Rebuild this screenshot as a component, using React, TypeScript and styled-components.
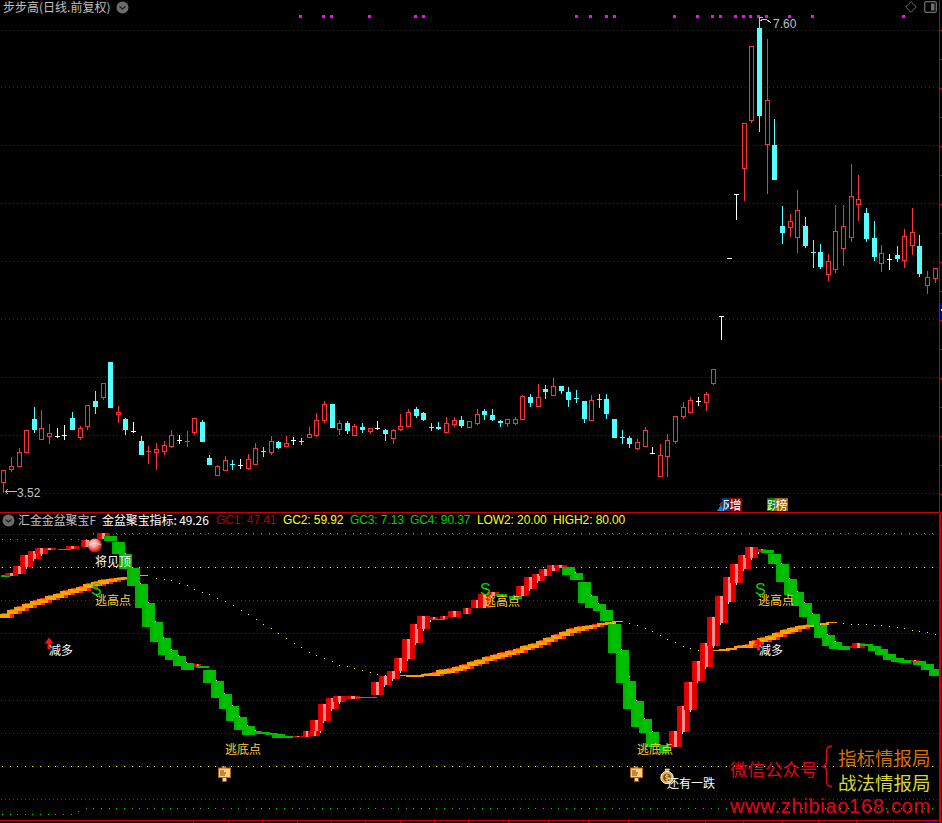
import React from "react";
import styled, { createGlobalStyle } from "styled-components";

const Global = createGlobalStyle`
  html, body { margin: 0; padding: 0; background: #000; }
  #root { width: 942px; height: 823px; overflow: hidden; }
`;

const Screen = styled.main`
  display: flex;
  flex-direction: column;
  width: 942px;
  height: 823px;
  background: #000;
  font-family: "Liberation Sans", "Noto Sans CJK SC", sans-serif;
  font-size: 12px;
  overflow: hidden;
`;
const Pane = styled.section<{ $h: number; $divider?: boolean }>`
  position: relative;
  flex: none;
  width: 942px;
  height: ${(p) => p.$h}px;
  border-top: ${(p) => (p.$divider ? "1px solid #c80000" : "none")};
  overflow: hidden;
`;
const Chart = styled.svg`
  display: block;
  width: 942px;
  height: 100%;
  shape-rendering: crispEdges;
`;
const TitleBar = styled.header<{ $top: number; $gap: number }>`
  position: absolute;
  top: ${(p) => p.$top}px;
  left: 0;
  right: 0;
  height: 14px;
  display: flex;
  align-items: center;
  gap: ${(p) => p.$gap}px;
  padding-left: 2px;
  white-space: nowrap;
  line-height: 14px;
`;
const StockName = styled.span`
  color: #c0c0c0;
  font-family: "Noto Sans CJK SC", "Liberation Sans", sans-serif;
  font-size: 12px;
  margin-left: 1px;
`;
const Metric = styled.span<{ $color: string; $cjk?: boolean; $w: number }>`
  color: ${(p) => p.$color};
  flex: none;
  width: ${(p) => p.$w}px;
  font-family: ${(p) => (p.$cjk ? '"Noto Sans CJK SC", ' : "")}"Liberation Sans", sans-serif;
  font-size: 12px;
  letter-spacing: -0.1px;
`;
const FundName = styled(Metric)`
  margin-left: 3px;
`;
const RoundChevron = styled.svg`
  flex: none;
  width: 13px;
  height: 13px;
`;
const WindowTools = styled.div`
  display: flex;
  align-items: center;
  gap: 7px;
  margin-left: auto;
  padding-right: 5px;
`;
const Label = styled.span<{ $x: number; $y: number; $color: string; $size?: number }>`
  position: absolute;
  left: ${(p) => p.$x}px;
  top: ${(p) => p.$y}px;
  color: ${(p) => p.$color};
  font-family: "Noto Sans CJK SC", sans-serif;
  font-size: ${(p) => p.$size ?? 12}px;
  line-height: 1;
  white-space: nowrap;
`;
const PriceTag = styled.span<{ $x: number; $y: number }>`
  position: absolute;
  left: ${(p) => p.$x}px;
  top: ${(p) => p.$y}px;
  color: #c0c0c0;
  font-family: "Liberation Sans", sans-serif;
  font-size: 12px;
  line-height: 1;
`;
const Badge = styled.div<{ $x: number }>`
  position: absolute;
  left: ${(p) => p.$x}px;
  top: 498px;
  height: 13px;
  display: flex;
`;
const BadgeCell = styled.span<{ $bg: string; $w: number }>`
  display: block;
  width: ${(p) => p.$w}px;
  height: 13px;
  overflow: hidden;
  background: ${(p) => p.$bg};
  color: #fff;
  font-family: "Noto Sans CJK SC", sans-serif;
  font-size: 12px;
  line-height: 13px;
  text-align: center;
`;
const SignalS = styled.span<{ $x: number; $y: number }>`
  position: absolute;
  left: ${(p) => p.$x}px;
  top: ${(p) => p.$y}px;
  color: #00d400;
  font-family: "Liberation Sans", sans-serif;
  font-size: 16px;
  line-height: 1;
`;
const Watermark = styled.span<{ $x: number; $y: number; $color: string; $size: number }>`
  position: absolute;
  left: ${(p) => p.$x}px;
  top: ${(p) => p.$y}px;
  color: ${(p) => p.$color};
  font-family: "Noto Sans CJK SC", sans-serif;
  font-size: ${(p) => p.$size}px;
  line-height: 1;
  white-space: nowrap;
`;
const SiteLink = styled.span`
  position: absolute;
  left: 730px;
  top: 283px;
  color: #e8001c;
  font-family: "Liberation Sans", sans-serif;
  font-size: 20px;
  letter-spacing: 0.72px;
  line-height: 1;
  white-space: nowrap;
`;

type Row = [number, number, number, number, number, string];
const CANDLES: { ox: number; oy: number; rows: Row[] }[] = [
  { ox: 0, oy: 350, rows: [
    [10,361,361,395,430,"r"],[34,322,348,358,365,"r"],[58,295,307,347,350,"r"],[79,240,241,307,307,"r"],
    [103,172,208,240,249,"c"],[124,180,235,266,266,"r"],[148,222,250,257,282,"r"],[171,235,257,258,263,"w"],
    [192,225,255,256,270,"w"],[217,186,204,240,240,"c"],[241,229,235,260,269,"r"],[262,165,166,227,240,"r"],
    [286,124,153,171,192,"c"],[310,99,99,140,150,"r"],[331,36,36,174,174,"c"],[355,168,186,193,219,"r"],
    [376,205,208,240,255,"c"],[400,216,244,245,249,"w"],[424,258,273,315,315,"c"],[445,288,304,306,342,"r"],
    [469,279,298,307,360,"r"],[493,273,286,302,315,"r"],[514,240,256,288,294,"r"],[538,255,270,271,282,"w"],
    [562,243,274,276,291,"r"],[583,205,205,245,255,"r"],[607,210,216,276,276,"c"],[628,315,324,345,345,"c"],
    [652,345,348,375,375,"r"],[676,318,330,361,361,"r"],[697,330,343,344,360,"d"],[720,327,344,345,357,"w"],
    [745,312,327,353,360,"r"],[766,279,294,341,341,"r"],[790,291,304,305,321,"d"],[814,258,273,305,315,"r"],
    [835,273,276,294,297,"c"],[859,258,280,287,291,"r"],[880,261,271,272,285,"w"],[904,264,273,274,285,"d"],
    [928,231,252,261,264,"r"],
  ]},
  { ox: 314, oy: 350, rows: [
    [8,189,210,255,261,"r"],[31,153,162,210,219,"r"],[55,162,162,234,234,"c"],[76,210,219,236,255,"r"],
    [100,213,219,243,252,"c"],[121,222,228,255,258,"r"],[145,219,231,240,249,"c"],[169,234,235,242,252,"r"],
    [190,213,235,236,240,"w"],[214,237,240,252,273,"c"],[238,237,240,264,282,"r"],[259,192,228,236,243,"r"],
    [283,177,186,228,228,"r"],[307,171,177,198,204,"c"],[328,186,189,210,213,"c"],[352,219,232,233,243,"d"],
    [373,216,231,237,240,"c"],[397,201,219,246,246,"r"],[421,201,210,221,231,"r"],[442,198,210,228,234,"c"],
    [466,213,213,231,231,"r"],[490,177,192,219,225,"r"],[511,177,183,195,210,"c"],[535,177,195,210,213,"c"],
    [559,210,212,218,231,"c"],[580,207,207,220,231,"r"],[604,201,207,219,225,"r"],[625,135,138,207,210,"r"],
    [649,132,141,159,171,"c"],[673,102,141,167,167,"r"],[694,105,117,126,147,"c"],[718,84,108,135,138,"r"],
    [742,108,108,123,132,"c"],[763,111,126,150,171,"c"],[787,120,144,145,159,"d"],[811,153,153,207,219,"c"],
    [832,135,150,209,209,"r"],[856,132,147,148,174,"d"],[877,132,147,192,207,"c"],[901,207,207,264,264,"c"],
    [925,240,261,262,282,"d"],
  ]},
  { ox: 628, oy: 350, rows: [
    [4,258,264,282,294,"c"],[28,267,276,293,300,"r"],[52,231,240,288,291,"r"],[73,291,309,310,310,"w"],
    [97,282,315,378,378,"r"],[118,252,270,318,381,"r"],[142,198,198,273,282,"r"],[166,156,171,198,207,"r"],
    [187,141,150,186,189,"r"],[211,141,153,154,168,"w"],[235,126,132,156,183,"r"],[256,57,57,99,105,"r"],
  ]},
  { ox: 700, oy: 170, rows: [
    [64,438,438,439,510,"w"],[87,265,265,266,265,"w"],[109,72,72,73,150,"w"],
  ]},
  { ox: 700, oy: 0, rows: [
    [133,370,370,503,603,"r"],[154,138,138,360,369,"r"],[178,50,84,348,396,"c"],[202,117,300,432,582,"r"],
    [223,357,435,540,540,"c"],
  ]},
  { ox: 700, oy: 170, rows: [
    [247,108,168,189,222,"c"],[271,132,153,170,201,"r"],[292,60,120,201,249,"r"],[316,141,168,228,234,"c"],
    [340,210,246,247,294,"d"],[361,222,246,291,297,"c"],[385,252,273,312,333,"r"],[406,105,183,296,309,"r"],
    [430,105,168,234,288,"r"],[454,-18,78,201,216,"r"],[475,15,87,102,153,"r"],[499,114,129,207,216,"c"],
    [523,153,204,261,273,"c"],[544,225,249,279,306,"r"],[568,252,268,269,300,"w"],[592,228,255,267,276,"c"],
    [613,177,198,270,294,"r"],[637,114,186,225,255,"r"],[658,195,228,312,321,"c"],[682,303,321,345,372,"r"],
    [706,294,294,324,339,"r"],
  ]},
];

const RED = "#ff3232";
const CYAN = "#54ffff";

type Block = [number, number, number, number, "R" | "G"];
const BLOCKS: { ox: number; oy: number; rows: Block[] }[] = [
  { ox: 0, oy: 510, rows: [
    [3,192,30,198,"G"],[16,185,54,195,"R"],[39,166,78,188,"R"],[60,133,100,168,"R"],[84,120,123,145,"R"],
    [105,111,145,130,"R"],[130,111,170,118,"R"],[175,113,215,117,"G"],[198,105,237,114,"R"],[243,87,280,108,"R"],
    [291,67,330,85,"R"],[312,75,351,90,"G"],[336,93,375,130,"G"],[357,130,396,175,"G"],[381,171,420,225,"G"],
    [405,219,444,291,"G"],[426,276,465,348,"G"],[450,333,489,393,"G"],[474,381,513,432,"G"],[495,418,534,447,"G"],
  ]},
  { ox: 0, oy: 660, rows: [
    [519,-15,558,15,"G"],[543,6,582,27,"G"],[582,9,603,18,"R"],[588,15,628,21,"G"],[609,27,648,66,"G"],
    [633,60,672,111,"G"],[657,99,696,144,"G"],[678,135,717,180,"G"],[702,168,741,207,"G"],[726,195,765,222,"G"],
    [765,210,786,218,"G"],[780,213,810,219,"G"],[795,216,835,222,"G"],[816,219,855,231,"G"],[850,225,880,231,"G"],
    [880,225,910,228,"R"],[909,210,933,228,"R"],[930,177,960,225,"R"],
  ]},
  { ox: 314, oy: 690, rows: [
    [-12,87,27,120,"R"],[12,39,51,90,"R"],[36,21,75,54,"R"],[58,15,96,33,"R"],[96,15,140,24,"R"],[126,18,189,21,"G"],
  ]},
  { ox: 314, oy: 510, rows: [
    [171,513,210,552,"R"],[195,495,234,522,"R"],[219,480,258,504,"R"],[240,441,279,480,"R"],[264,384,303,444,"R"],
    [288,339,327,396,"R"],[309,315,348,354,"R"],[348,318,372,327,"R"],[354,323,393,327,"G"],[378,315,402,324,"R"],
    [402,300,441,318,"R"],[447,291,471,309,"R"],[471,267,510,291,"R"],[492,249,531,291,"R"],[519,243,555,255,"R"],
    [546,250,579,256,"G"],[585,255,624,264,"G"],[606,225,645,255,"R"],[630,198,669,234,"R"],[654,189,693,210,"R"],
    [675,174,714,195,"R"],[699,162,738,180,"R"],[720,162,760,170,"R"],[744,168,783,192,"G"],[768,186,807,207,"G"],
    [792,213,831,276,"G"],[813,255,852,291,"G"],[837,279,876,300,"G"],[858,297,897,330,"G"],[882,339,921,426,"G"],
    [906,417,945,516,"G"],[927,516,966,570,"G"],
  ]},
  { ox: 600, oy: 680, rows: [
    [48,-12,90,6,"G"],[69,0,108,84,"G"],[93,60,132,138,"G"],[117,114,156,156,"G"],[138,153,177,198,"G"],[177,192,207,216,"G"],
    [207,150,246,198,"R"],[231,75,270,153,"R"],[252,3,291,87,"R"],
  ]},
  { ox: 628, oy: 510, rows: [
    [192,450,231,510,"R"],[216,396,255,468,"R"],[237,318,276,405,"R"],[261,255,300,336,"R"],[285,198,324,273,"R"],
    [306,159,345,216,"R"],[330,132,369,174,"R"],[351,108,390,141,"R"],[390,114,414,123,"R"],[399,117,438,126,"G"],
    [420,129,459,159,"G"],[444,159,483,213,"G"],[468,204,507,252,"G"],[489,243,528,285,"G"],[513,276,552,318,"G"],
    [537,309,576,342,"G"],[558,342,597,381,"G"],[582,372,621,405,"G"],[603,393,642,414,"G"],[627,405,666,417,"G"],
    [666,405,672,411,"R"],[672,396,711,411,"R"],[696,399,735,405,"G"],[720,405,759,420,"G"],[741,414,780,432,"G"],
    [765,429,804,447,"G"],[789,441,828,453,"G"],[810,447,849,456,"G"],[849,447,873,453,"R"],[855,450,894,462,"G"],
    [879,459,918,477,"G"],[903,474,933,495,"G"],
  ]},
];

const toPts = (ox: number, oy: number, list: number[][]) =>
  list.map(([x, y]) => [ox + x / 3, oy + y / 3]);

const BAND_1 = toPts(0, 510, [[3,315],[40,297],[85,280],[130,265],[170,252],[215,238],[260,225],[300,212],[350,203],[400,195],[445,193]]);
const BAND_2 = toPts(314, 510, [[258,496],[300,495],[350,488],[400,480],[450,465],[500,448],[550,433],[600,422],[650,403],[700,385],[750,365],[800,350],[850,340],[900,332],[925,329]]);
const BAND_3 = toPts(628, 510, [[255,420],[300,414],[350,403],[400,385],[450,368],[500,350],[550,340],[625,334]]);

const TRAIL = [
  ...toPts(0, 510, [[469,200],[492,204],[514,208],[538,216],[561,223],[583,233],[607,242],[628,250],[652,260],[676,271],[699,283],[722,297],[745,310],[767,324],[790,339],[814,352],[835,367],[859,381],[881,396],[904,408],[928,422]]),
  ...toPts(314, 510, [[7,433],[31,442],[55,451],[76,461],[100,464],[121,472],[145,478],[169,484],[190,490],[214,493]]),
  ...toPts(628, 510, [[4,337],[28,343],[52,352],[73,361],[97,373],[118,385],[142,394],[166,406],[187,411],[211,417],[646,337],[670,338],[691,338],[715,340],[739,343],[760,343],[784,346],[808,349],[829,352],[853,358],[874,361],[898,364],[922,370]]),
];

const MAGENTA = [300,323,331,369,415,423,576,590,606,614,674,697,712,720,735,743,750,758,766,789,812,903];
const UPPER_GRID = [30,87,145,203,261,319,377,435,493];
const LOWER_GRID = [533,566,599,632,665,699,732,765,798];
const BOTTOM_TICKS = [193,228,262,297,331,365,400,434,468,508,548,588,628,667,705,743,782,818,856,893];

const range = (from: number, to: number, step: number) => {
  const out: number[] = [];
  for (let v = from; v <= to; v += step) out.push(v);
  return out;
};

function Candle({ row, ox, oy }: { row: Row; ox: number; oy: number }) {
  const [xz, hi, top, bot, lo, kind] = row;
  const x = Math.floor(ox + xz / 3);
  const y = (v: number) => Math.round(oy + v / 3);
  const color = kind === "r" ? RED : kind === "w" ? "#fff" : CYAN;
  const bodyH = Math.max(1, y(bot) - y(top));
  return (
    <g>
      {y(top) > y(hi) && <rect x={x} y={y(hi)} width={1} height={y(top) - y(hi)} fill={color} />}
      {y(lo) > y(bot) && <rect x={x} y={y(bot)} width={1} height={y(lo) - y(bot)} fill={color} />}
      {kind === "r" && bodyH > 1 ? (
        <rect x={x - 1.5} y={y(top) + 0.5} width={4} height={bodyH} fill="#000" stroke={color} />
      ) : (
        <rect x={x - 2} y={y(top)} width={5} height={bodyH} fill={color} />
      )}
    </g>
  );
}

function Stairs() {
  const flat = BLOCKS.flatMap((g) =>
    g.rows.map(([x1, t, x2, b, c]) => {
      const left = Math.floor(g.ox + x1 / 3);
      const right = Math.floor(g.ox + x2 / 3);
      const top = Math.round(g.oy + t / 3);
      const bottom = Math.round(g.oy + b / 3);
      return { left, right, top, bottom, c };
    })
  );
  flat.sort((a, b) => a.left - b.left);
  return (
    <g>
      {flat.map((b, i) => (
        <rect
          key={i}
          x={b.left}
          y={b.top}
          width={b.right - b.left}
          height={Math.max(1, b.bottom - b.top)}
          fill={b.c === "R" ? "url(#redBar)" : "url(#greenBar)"}
        />
      ))}
      {flat.map((b, i) => {
        const n = flat[i + 1];
        if (!n || n.c !== b.c || b.bottom - b.top < 8) return null;
        if (b.c === "G" && n.top > b.top) {
          return <rect key={"w" + i} x={b.right} y={n.top - 1} width={1} height={1} fill="#fff" />;
        }
        if (b.c === "R" && n.bottom < b.bottom) {
          return <rect key={"w" + i} x={b.right} y={n.bottom} width={1} height={2} fill="#fff" />;
        }
        return null;
      })}
    </g>
  );
}

function Band({ points, fullStart }: { points: number[][]; fullStart?: boolean }) {
  const [x0] = points[0];
  const xEnd = points[points.length - 1][0];
  const at = (x: number) => {
    for (let i = 1; i < points.length; i++) {
      if (x <= points[i][0]) {
        const [ax, ay] = points[i - 1];
        const [bx, by] = points[i];
        return ay + ((by - ay) * (x - ax)) / (bx - ax);
      }
    }
    return points[points.length - 1][1];
  };
  const steps = range(x0, xEnd - 6, 7.65).map((x, i, all) => {
    const fromStart = fullStart ? 99 : i;
    const fromEnd = all.length - 1 - i;
    const h = Math.round(Math.min(5, 1 + Math.min(fromStart, fromEnd) * 0.7));
    return { left: Math.round(x), y: Math.round(at(x)), h };
  });
  return (
    <g>
      {steps.map((s, i) =>
        s.h >= 3 ? (
          <rect key={"r" + i} x={s.left + 1} y={s.y - Math.ceil(s.h / 2)} width={12} height={s.h} fill="#ff2400" />
        ) : null
      )}
      {steps.map((s, i) => (
        <rect
          key={"o" + i}
          x={s.left - 2}
          y={s.y - Math.ceil(s.h / 2) + (s.h >= 3 ? 1 : 0)}
          width={11}
          height={s.h >= 3 ? s.h - 1 : s.h}
          fill="#ff9c00"
        />
      ))}
      {steps.map((s, i) =>
        s.h >= 5 ? <rect key={"y" + i} x={s.left + 1} y={s.y} width={5} height={1} fill="#ffb800" /> : null
      )}
    </g>
  );
}

const Chevron = () => (
  <RoundChevron viewBox="0 0 13 13">
    <circle cx="6.5" cy="6.5" r="6" fill="#6c6c6c" />
    <path d="M3.5 5.5 L6.5 8 L9.5 5.5" stroke="#1c1c1c" strokeWidth="1.2" fill="none" />
  </RoundChevron>
);

const Sign = ({ x, y }: { x: number; y: number }) => (
  <g transform={`translate(${x} ${y})`} shapeRendering="auto">
    <rect x="4" y="0" width="4" height="2" fill="#e0983c" />
    <rect x="4.5" y="11" width="4" height="4" fill="#ffd9a0" stroke="#a05810" strokeWidth="1" />
    <rect x="0.5" y="1.5" width="12" height="9.5" fill="#ffcf80" stroke="#b06010" strokeWidth="1" />
    <path d="M2 4.5 H6 M2 6.5 H8 M2 8.5 H7" stroke="#7a4008" strokeWidth="1" />
  </g>
);

export default function App() {
  const dots = range(2, 935, 7.62);
  return (
    <Screen>
      <Global />
      <Pane $h={512}>
        <Chart viewBox="0 0 942 512">
          {UPPER_GRID.map((y) => (
            <line key={y} x1={1} x2={939} y1={y + 0.5} y2={y + 0.5} stroke="#a00000" strokeDasharray="1 3" />
          ))}
          {CANDLES.flatMap((g, gi) =>
            g.rows.map((r, i) => <Candle key={gi + "-" + i} row={r} ox={g.ox} oy={g.oy} />)
          )}
          {MAGENTA.map((x) => (
            <rect key={x} x={x - 1} y={15} width={3} height={3} fill="#ff00ff" />
          ))}
          <path d="M17 491.5 H5 M5 491.5 L8 489.5 M5 491.5 L8 493.5" stroke="#c0c0c0" fill="none" />
          <path d="M759.5 22 V17.5 H763 M759.5 20.5 H762 M761 19.5 H766 L771 22.5" stroke="#c0c0c0" fill="none" />
          <rect x={939} y={0} width={1} height={512} fill="#c80000" />
          {range(30, 512, 29).map((y) => (
            <rect key={y} x={940} y={y} width={2} height={1} fill="#c80000" />
          ))}
          <rect x={940} y={303} width={2} height={16} fill="#000090" />
          <rect x={941} y={309} width={1} height={2} fill="#fff" />
          <path d="M717 511 L722 503 V511 Z" fill="#0090e0" />
          <path d="M719 505 L722 501 V507 Z" fill="#e00000" />
        </Chart>
        <TitleBar $top={0} $gap={6}>
          <StockName>步步高(日线.前复权)</StockName>
          <Chevron />
          <WindowTools>
            <svg width="12" height="12" viewBox="0 0 12 12">
              <path d="M6 .7 L11.3 6 L6 11.3 L.7 6 Z" fill="none" stroke="#6e6e6e" />
            </svg>
            <svg width="13" height="12" viewBox="0 0 13 12">
              <rect x=".7" y=".7" width="11.6" height="10.6" rx="1.5" fill="none" stroke="#6e6e6e" strokeWidth="1.3" />
              <rect x="7" y="2.5" width="3.5" height="7" fill="#6e6e6e" />
            </svg>
          </WindowTools>
        </TitleBar>
        <PriceTag $x={17} $y={487}>3.52</PriceTag>
        <PriceTag $x={773} $y={18}>7.60</PriceTag>
        <Badge $x={722}>
          <BadgeCell $bg="#003c80" $w={7}>风</BadgeCell>
          <BadgeCell $bg="#900000" $w={13}>增</BadgeCell>
        </Badge>
        <Badge $x={767}>
          <BadgeCell $bg="#008000" $w={8}>跃</BadgeCell>
          <BadgeCell $bg="#a06010" $w={13}>榜</BadgeCell>
        </Badge>
      </Pane>
      <Pane $h={311} $divider>
        <Chart viewBox="0 513 942 310">
          <defs>
            <linearGradient id="redBar" x1="0" x2="1" y1="0" y2="0">
              <stop offset="0" stopColor="#d00000" />
              <stop offset="0.37" stopColor="#ff0000" />
              <stop offset="0.38" stopColor="#ff8c8c" />
              <stop offset="0.64" stopColor="#ff8c8c" />
              <stop offset="0.65" stopColor="#ee0000" />
              <stop offset="1" stopColor="#d00000" />
            </linearGradient>
            <linearGradient id="greenBar" x1="0" x2="1" y1="0" y2="0">
              <stop offset="0" stopColor="#00ac00" />
              <stop offset="0.4" stopColor="#00c400" />
              <stop offset="1" stopColor="#00b800" />
            </linearGradient>
            <radialGradient id="ball" cx="0.4" cy="0.35" r="0.75">
              <stop offset="0" stopColor="#ffd8d8" />
              <stop offset="0.35" stopColor="#ff9c9c" />
              <stop offset="0.75" stopColor="#d82020" />
              <stop offset="1" stopColor="#900808" />
            </radialGradient>
          </defs>
          {LOWER_GRID.map((y) => (
            <line key={y} x1={1} x2={939} y1={y + 0.5} y2={y + 0.5} stroke="#b00000" strokeDasharray="1 3" />
          ))}
          {dots.map((x) => (
            <g key={x}>
              <rect x={Math.round(x)} y={566} width={1} height={1} fill="#ffff40" />
              <rect x={Math.round(x)} y={765} width={1} height={1} fill="#ffff40" />
              <rect x={Math.round(x)} y={x < 88 ? 538 : 532} width={1} height={1} fill="#00e000" />
              <rect x={Math.round(x)} y={x < 76 ? 813 : x < 84 ? 810 : 807} width={1} height={1} fill="#00e000" />
            </g>
          ))}
          {TRAIL.map(([x, y], i) => (
            <rect key={i} x={Math.round(x)} y={Math.round(y)} width={1} height={1} fill="#ffff40" />
          ))}
          <Band points={BAND_1} fullStart />
          <Band points={BAND_2} />
          <Band points={BAND_3} />
          <Stairs />
          <g shapeRendering="auto">
            <circle cx="95" cy="545" r="7" fill="url(#ball)" />
            <path d="M89.5 544 Q95 541 100.5 544" stroke="#fff" strokeWidth="1" fill="none" opacity="0.8" />
            <path d="M49 637 L53.5 643 H50.5 V649 H47.5 V643 H44.5 Z" fill="#ff1010" />
            <path d="M758 638 L763 644 H760 V650 H757 V644 H753 Z" fill="#ff1010" />
            <path d="M665 768.5 H669.5 L668.5 771 H666 Z" fill="#d8a040" stroke="#fff" strokeWidth="0.6" />
            <circle cx="667" cy="777" r="6.2" fill="#e6b24a" stroke="#fff4d0" strokeWidth="1" />
            <circle cx="667" cy="777" r="3.8" fill="#7a4a10" />
            <path d="M668.7 775.3 Q667 774 665.5 775.4 Q665 777 667 777 Q669 777.2 668.5 778.7 Q667 780 665.3 778.7 M667 773.5 V780.5" stroke="#ffe8a0" strokeWidth="0.7" fill="none" />
            <path d="M832 745.5 Q826.5 745.5 826.5 751 V761 Q826.5 765 823.5 766 Q826.5 767 826.5 771 V781 Q826.5 786 832 786" stroke="#e8001c" strokeWidth="1.4" fill="none" />
          </g>
          <Sign x={218} y={766} />
          <Sign x={630} y={766} />
          <rect x={939} y={513} width={2} height={310} fill="#c80000" />
          <rect x={0} y={819} width={939} height={1} fill="#c80000" />
          {BOTTOM_TICKS.map((x) => (
            <rect key={x} x={x} y={820} width={1} height={3} fill="#c80000" />
          ))}
          <rect x={923} y={820} width={14} height={3} fill="#0000a0" />
        </Chart>
        <TitleBar $top={0} $gap={0}>
          <Chevron />
          <FundName $color="#c0c0c0" $cjk $w={84}>汇金金盆聚宝F</FundName>
          <Metric $color="#ffffff" $cjk $w={114}>金盆聚宝指标: 49.26</Metric>
          <Metric $color="#b00000" $w={67}>GC1: 47.41</Metric>
          <Metric $color="#ffff00" $w={67}>GC2: 59.92</Metric>
          <Metric $color="#00d000" $w={60}>GC3: 7.13</Metric>
          <Metric $color="#00d000" $w={67}>GC4: 90.37</Metric>
          <Metric $color="#ffff00" $w={76}>LOW2: 20.00</Metric>
          <Metric $color="#ffff00" $w={84}>HIGH2: 80.00</Metric>
        </TitleBar>
        <Label $x={95} $y={42} $color="#ffffff">将见顶</Label>
        <Label $x={95} $y={81} $color="#ffd040">逃高点</Label>
        <Label $x={484} $y={82} $color="#ffd040">逃高点</Label>
        <Label $x={758} $y={81} $color="#ffd040">逃高点</Label>
        <Label $x={49} $y={131} $color="#ffffff">减多</Label>
        <Label $x={759} $y={131} $color="#ffffff">减多</Label>
        <Label $x={225} $y={230} $color="#ffd040">逃底点</Label>
        <Label $x={637} $y={230} $color="#ffd040">逃底点</Label>
        <Label $x={667} $y={264} $color="#ffffff">还有一跌</Label>
        <SignalS $x={91} $y={69}>S</SignalS>
        <SignalS $x={480} $y={69}>S</SignalS>
        <SignalS $x={755} $y={69}>S</SignalS>
        <Watermark $x={730} $y={247} $color="#e8001c" $size={17.5}>微信公众号</Watermark>
        <Watermark $x={838} $y={235} $color="#d87000" $size={18.5}>指标情报局</Watermark>
        <Watermark $x={838} $y={260} $color="#d8d838" $size={18.5}>战法情报局</Watermark>
        <SiteLink>www.zhibiao168.com</SiteLink>
      </Pane>
    </Screen>
  );
}
